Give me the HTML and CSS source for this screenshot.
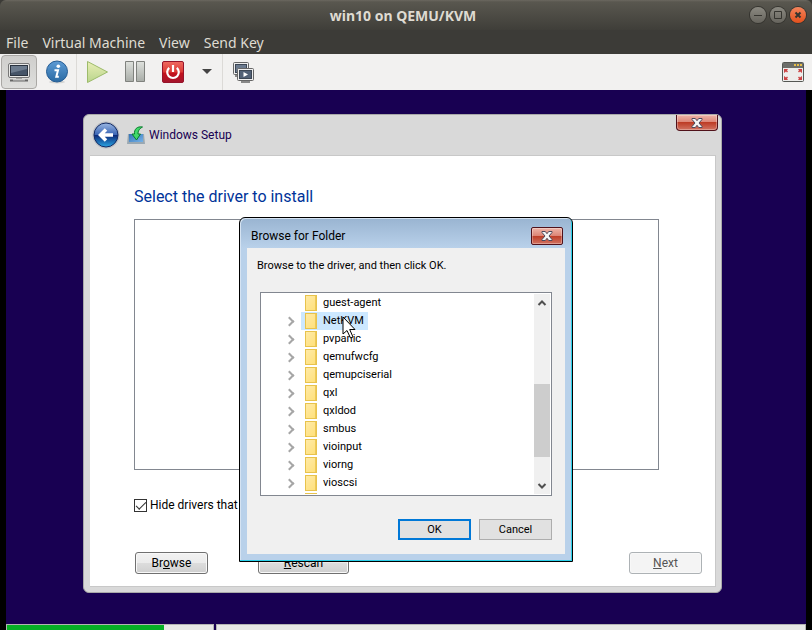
FILE: index.html
```html
<!DOCTYPE html>
<html lang="en">
<head>
    <meta charset="UTF-8">
    <meta name="viewport" content="width=device-width, initial-scale=1.0">
    <title>win10 on QEMU/KVM</title>
    <link rel="stylesheet" href="styles.css">
</head>
<body>
    <header class="titlebar">
        <h1>win10 on QEMU/KVM</h1>
        <div class="window-buttons">
            <button type="button" aria-label="Minimize"><svg viewBox="0 0 16 16"><path d="M4 8.5h8"/></svg></button>
            <button type="button" aria-label="Maximize"><svg viewBox="0 0 16 16"><path d="M4.5 4.5h7v7h-7z"/></svg></button>
            <button type="button" class="close" aria-label="Close"><svg viewBox="0 0 16 16"><path d="M5.5 5.5l5 5M10.5 5.5l-5 5"/></svg></button>
        </div>
    </header>
    <nav class="menubar">
        <a href="#">File</a>
        <a href="#">Virtual Machine</a>
        <a href="#">View</a>
        <a href="#">Send Key</a>
    </nav>

    <!-- Toolbar -->
    <div class="toolbar">
        <button type="button" class="tool active" aria-label="Console">
            <svg width="24" height="24" viewBox="0 0 24 24">
                <rect x="1.5" y="3.5" width="21" height="14" rx="1.5" fill="#e8e8e6" stroke="#777"/>
                <rect x="3.5" y="5.5" width="17" height="10" fill="#465568" stroke="#2b3440"/>
                <path d="M4 6h16v3L4 13z" fill="#6d7c8e"/>
                <path d="M9 18h6v2H9z" fill="#a5a5a3"/>
                <path d="M3 19.5h18v2H3z" fill="#666"/>
                <path d="M6 19h12v1.5H6z" fill="#ccc"/>
            </svg>
        </button>
        <button type="button" class="tool" aria-label="Details">
            <svg width="24" height="24" viewBox="0 0 24 24">
                <defs>
                    <linearGradient id="blue" x1="0" y1="0" x2="0" y2="1"><stop offset="0" stop-color="#5d9bd5"/><stop offset="1" stop-color="#2a6aa3"/></linearGradient>
                </defs>
                <ellipse cx="12" cy="22" rx="8" ry="1.5" fill="#d4d4d2"/>
                <circle cx="12" cy="11.5" r="10.5" fill="url(#blue)" stroke="#245c94"/>
                <circle cx="13.3" cy="6.3" r="1.8" fill="#fff"/>
                <path d="M9.5 10.2h3.5l-1.7 6.6h2.5" fill="none" stroke="#fff" stroke-width="2"/>
            </svg>
        </button>
        <span class="separator"></span>
        <button type="button" class="tool" aria-label="Run">
            <svg width="24" height="24" viewBox="0 0 24 24">
                <defs><linearGradient id="green" x1="0" y1="0" x2="0" y2="1"><stop offset="0" stop-color="#e9eeb5"/><stop offset="1" stop-color="#b9d58c"/></linearGradient></defs>
                <path d="M2.5 1.5v21L22.5 12z" fill="url(#green)" stroke="#9dbb6b" stroke-linejoin="round"/>
            </svg>
        </button>
        <button type="button" class="tool" aria-label="Pause">
            <svg width="24" height="24" viewBox="0 0 24 24">
                <defs><linearGradient id="grey" x1="0" y1="0" x2="0" y2="1"><stop offset="0" stop-color="#dfe1dd"/><stop offset="1" stop-color="#a9ada8"/></linearGradient></defs>
                <path d="M2.5 1.5h8v20h-8zM13.5 1.5h8v20h-8z" fill="url(#grey)" stroke="#80827e"/>
            </svg>
        </button>
        <button type="button" class="tool" aria-label="Shut Down">
            <svg width="24" height="24" viewBox="0 0 24 24">
                <defs><linearGradient id="red" x1="0" y1="0" x2="0" y2="1"><stop offset="0" stop-color="#ef6a61"/><stop offset=".5" stop-color="#dc3a35"/><stop offset=".55" stop-color="#c4121c"/><stop offset="1" stop-color="#a3142c"/></linearGradient></defs>
                <rect x="1.5" y="1.5" width="21" height="21" rx="1.5" fill="url(#red)" stroke="#96142a"/>
                <path d="M8.2 7.8a5.8 5.8 0 1 0 7.6 0M12 5v7" fill="none" stroke="#fff" stroke-width="2.2"/>
            </svg>
        </button>
        <button type="button" class="tool narrow" aria-label="Shut down menu">
            <svg width="10" height="6" viewBox="0 0 10 6"><path d="M0 0h10L5 5z" fill="#444"/></svg>
        </button>
        <span class="separator"></span>
        <button type="button" class="tool" aria-label="Snapshots">
            <svg width="24" height="24" viewBox="0 0 24 24">
                <path d="M4 15h8v2H4z" fill="#888"/>
                <rect x="2.5" y="2.5" width="15" height="12" rx="1" fill="#eee" stroke="#666"/>
                <rect x="4.5" y="4.5" width="11" height="8" fill="#6b7a8e" stroke="#3c4654"/>
                <rect x="6.5" y="8.5" width="16" height="12" rx="1" fill="#eee" stroke="#666"/>
                <rect x="8.5" y="10.5" width="12" height="8" fill="#526176" stroke="#3c4654"/>
                <path d="M12.5 12v5l4.5-2.5z" fill="#fff"/>
                <path d="M10 22h9" stroke="#888" stroke-width="2"/>
            </svg>
        </button>
        <button type="button" class="tool fullscreen" aria-label="Fullscreen">
            <svg width="24" height="24" viewBox="0 0 24 24">
                <rect x="1.5" y="2.5" width="21" height="19" rx="1" fill="#ededeb" stroke="#555753"/>
                <path d="M2 3h20v5H2z" fill="#6c6d69"/>
                <path d="M13 4h2v2h-2zM16 4h2v2h-2zM19 4h2v2h-2z" fill="#e6bd48"/>
                <path d="M3 9h4L6 10.5l1 1-1 1-1-1L3 13zM21 9h-4l1 1.5-1 1 1 1 1-1 2 1.5zM3 20h4l-1-1.5 1-1-1-1-1 1L3 16zM21 20h-4l1-1.5-1-1 1-1 1 1 2-1.5z" fill="#c44"/>
            </svg>
        </button>
    </div>

    <!-- Guest display -->
    <main class="desktop">
        <section class="setup">
            <header class="setup-header">
                <button type="button" class="back" aria-label="Back">
                    <svg width="28" height="28" viewBox="0 0 28 28">
                        <defs><linearGradient id="back" x1="0" y1="0" x2="0" y2="1"><stop offset="0" stop-color="#9cb8e3"/><stop offset=".48" stop-color="#3b66b5"/><stop offset=".52" stop-color="#0c2b7b"/><stop offset="1" stop-color="#2aa6e4"/></linearGradient></defs>
                        <circle cx="14" cy="14" r="13.5" fill="#b9bcc2"/>
                        <circle cx="14" cy="14" r="12" fill="url(#back)" stroke="#142c66"/>
                        <path d="M21 14H9M14 8.5L8.5 14l5.5 5.5" fill="none" stroke="#fff" stroke-width="3.5"/>
                    </svg>
                </button>
                <svg width="18" height="18" viewBox="0 0 18 18">
                    <defs><linearGradient id="box" x1="0" y1="0" x2="1" y2="1"><stop offset="0" stop-color="#3473b5"/><stop offset="1" stop-color="#75b2e8"/></linearGradient></defs>
                    <path d="M1 8h16l1 10H0z" fill="#9aa8b2"/>
                    <path d="M2 8h14v8H2z" fill="url(#box)"/>
                    <path d="M15.5 1C10 0 7 3.5 7.5 8H5l4.5 6 4-6H11c0-3 1-5 4.5-7z" fill="#42d86a" stroke="#087b2c"/>
                </svg>
                <h2>Windows Setup</h2>
                <button type="button" class="red-close setup-close" aria-label="Close">
                    <svg width="12" height="10" viewBox="0 0 12 10"><path d="M1 .5h3.3L6 2.7 7.7.5H11v1L8 5l3 3.5v1H7.7L6 7.3 4.3 9.5H1v-1L4 5 1 1.5z" fill="#f5f5f5" stroke="#4d4a5c"/></svg>
                </button>
            </header>
            <div class="setup-body">
                <h3>Select the driver to install</h3>
                <div class="driver-list"></div>
                <label class="check"><input type="checkbox" checked>Hide drivers that</label>
                <div class="setup-buttons">
                    <button type="button">Br<u>o</u>wse</button>
                    <button type="button" class="rescan"><u>R</u>escan</button>
                    <button type="button" class="next" disabled><u>N</u>ext</button>
                </div>
            </div>
        </section>

        <!-- Folder picker -->
        <section class="dialog">
            <header class="dialog-header">
                <h2>Browse for Folder</h2>
                <button type="button" class="red-close" aria-label="Close">
                    <svg width="12" height="10" viewBox="0 0 12 10"><path d="M1 .5h3.3L6 2.7 7.7.5H11v1L8 5l3 3.5v1H7.7L6 7.3 4.3 9.5H1v-1L4 5 1 1.5z" fill="#f5f5f5" stroke="#4d4a5c"/></svg>
                </button>
            </header>
            <div class="dialog-body">
                <p>Browse to the driver, and then click OK.</p>
                <div class="tree">
                    <ul>
                        <li class="leaf"><a href="#">guest-agent</a></li>
                        <li class="selected"><a href="#">NetKVM</a></li>
                        <li><a href="#">pvpanic</a></li>
                        <li><a href="#">qemufwcfg</a></li>
                        <li><a href="#">qemupciserial</a></li>
                        <li><a href="#">qxl</a></li>
                        <li><a href="#">qxldod</a></li>
                        <li><a href="#">smbus</a></li>
                        <li><a href="#">vioinput</a></li>
                        <li><a href="#">viorng</a></li>
                        <li><a href="#">vioscsi</a></li>
                        <li class="leaf"><a href="#" aria-label="Next folder"></a></li>
                    </ul>
                    <div class="scrollbar">
                        <button type="button" aria-label="Scroll up"><svg width="10" height="8" viewBox="0 0 10 8"><path d="M1.5 6L5 2.5 8.5 6"/></svg></button>
                        <div class="track"><div class="thumb"></div></div>
                        <button type="button" aria-label="Scroll down"><svg width="10" height="8" viewBox="0 0 10 8"><path d="M1.5 2L5 5.5 8.5 2"/></svg></button>
                    </div>
                </div>
                <div class="dialog-buttons">
                    <button type="button" class="default">OK</button>
                    <button type="button">Cancel</button>
                </div>
            </div>
        </section>

        <svg class="cursor" width="14" height="24" viewBox="0 0 14 24"><path d="M1 1v17l4-3.5 3.5 7.5 2.5-1-3.3-7.5H13z" fill="#fff" stroke="#000"/></svg>

        <footer class="steps">
            <progress class="step" value="76" max="100" aria-label="Collecting information"></progress>
            <div class="step rest"></div>
        </footer>
    </main>
</body>
</html>
```
FILE: styles.css
```css
*, *::before {
    box-sizing: border-box;
}
body {
    font-family: "Noto Sans", sans-serif;
    margin: 0;
    min-height: 100vh;
    display: flex;
    flex-direction: column;
    background: #3c3b37;
}
button {
    font: inherit;
    padding: 0;
    border: none;
    background: none;
}
h1, h2, h3, p, ul {
    margin: 0;
    padding: 0;
    font-weight: normal;
}
svg {
    display: block;
    flex: none;
}
a {
    color: inherit;
    text-decoration: none;
}

/* Host window */
.titlebar {
    display: grid;
    grid-template-columns: 1fr auto 1fr;
    align-items: center;
    height: 30px;
    padding-right: 6px;
    background: linear-gradient(#6b6860 0, #59574f 2px, #3f3e39 100%);
    border-radius: 6px 6px 0 0;
    color: #dfdbd2;
}
.titlebar h1 {
    grid-column: 2;
    font-size: 14px;
    font-weight: bold;
}
.window-buttons {
    display: flex;
    justify-content: flex-end;
    gap: 4px;
}
.window-buttons button {
    width: 16px;
    height: 16px;
    border-radius: 50%;
    background: linear-gradient(#8b8981, #66645d);
    box-shadow: 0 0 0 1px #35342f;
}
.window-buttons .close {
    background: linear-gradient(#f4845c, #e2501c);
}
.window-buttons path {
    fill: none;
    stroke: #35342f;
}
.window-buttons .close path {
    stroke-width: 2;
}
.menubar {
    display: flex;
    align-items: center;
    gap: 14px;
    height: 24px;
    padding: 0 6px;
    font-size: 14px;
    color: #dfdbd2;
}
.toolbar {
    display: flex;
    align-items: center;
    height: 36px;
    padding: 0 1px;
    background: #f2f1f0;
}
.tool {
    display: flex;
    align-items: center;
    justify-content: center;
    width: 38px;
    height: 34px;
}
.tool.active {
    width: 36px;
    margin-right: 1px;
    background: linear-gradient(#cfcecc, #dededc);
    border: 1px solid #aaa8a5;
    border-radius: 4px;
}
.tool.narrow {
    width: 30px;
}
.tool.fullscreen {
    margin-left: auto;
    width: 36px;
}
.separator {
    width: 1px;
    height: 36px;
    margin-right: 1px;
    background: #dcdad7;
}

/* Guest display */
.desktop {
    position: relative;
    flex: 1;
    display: flex;
    flex-direction: column;
    justify-content: flex-end;
    min-height: 540px;
    border: solid #000;
    border-width: 0 6px;
    background: #180052;
    font-family: Roboto, "Open Sans", sans-serif;
    overflow: hidden;
}
.steps {
    display: flex;
    gap: 2px;
    height: 6px;
}
.step {
    appearance: none;
    width: 26%;
    height: 6px;
    border: 1px solid #b4b4b4;
    border-bottom: none;
    background: #e6e6e6;
}
.step.rest {
    flex: 1;
}
.step::-webkit-progress-bar {
    background: #e6e6e6;
}
.step::-webkit-progress-value {
    background: #06b025;
}

/* Windows Setup */
.setup {
    position: absolute;
    top: 24px;
    left: 77px;
    right: 84px;
    padding: 0 5px 5px 6px;
    border: 1px solid #a9a9a9;
    border-radius: 6px;
    background: #d9d9d9;
    font-size: 12px;
    color: #000;
}
.setup-header {
    display: flex;
    align-items: center;
    gap: 7px;
    height: 40px;
    padding-left: 2px;
}
.setup-header h2 {
    flex: 1;
    margin-left: -3px;
    font-size: 12px;
    color: #180052;
}
.red-close {
    display: flex;
    align-items: center;
    justify-content: center;
    width: 32px;
    height: 18px;
    border: 1px solid #50111a;
    border-radius: 2px;
    background: linear-gradient(#eeb4a8 0, #dc8374 50%, #bd3c26 50%, #d27362 100%);
    box-shadow: inset 0 0 0 1px rgba(255, 255, 255, 0.3);
}
.setup-close {
    align-self: flex-start;
    width: 42px;
    height: 16px;
    margin-right: -2px;
    border-top: none;
    border-radius: 0 0 4px 4px;
}
.setup-body {
    padding: 30px 12px 12px 44px;
    border: 1px solid #c8c8c8;
    border-width: 1px 1px 1px 0;
    background: #fff;
}
.setup-body h3 {
    font-size: 16px;
    line-height: 22px;
    color: #003399;
}
.driver-list {
    height: 251px;
    margin: 11px 44px 0 0;
    border: 1px solid #828790;
}
.check {
    display: flex;
    align-items: center;
    gap: 3px;
    height: 20px;
    margin-top: 25px;
}
.check input {
    appearance: none;
    width: 13px;
    height: 13px;
    margin: 0;
    border: 1px solid #333;
    background: #fff;
}
.check input:checked::before {
    content: "";
    display: block;
    width: 10px;
    height: 5px;
    margin: 2px 1px;
    border: solid #333;
    border-width: 0 0 1px 1px;
    transform: rotate(-45deg);
}
.setup-buttons {
    display: flex;
    margin-top: 37px;
    padding: 0 1px;
}
.setup-buttons button {
    width: 73px;
    height: 22px;
    border: 1px solid #707070;
    border-radius: 3px;
    background: linear-gradient(#f2f2f2 0, #ebebeb 50%, #dddddd 50%, #cfcfcf 100%);
    box-shadow: inset 0 0 0 1px #f8f8f8;
    color: #000;
}
.setup-buttons .rescan {
    width: 91px;
    margin-left: 50px;
}
.setup-buttons .next {
    margin-left: auto;
    border-color: #adb2b5;
    background: #f4f4f4;
    color: #555;
}

/* Browse for Folder */
.dialog {
    position: absolute;
    top: 127px;
    left: 233px;
    width: 334px;
    padding: 0 6px 6px;
    border: 1px solid #000;
    border-radius: 6px 6px 0 0;
    background: linear-gradient(#99b4d1 0, #b9d1ea 30px);
    box-shadow: inset -1px -1px 0 #2bd0ea, inset 1px 1px 0 #d5e3f2;
    font-size: 11px;
    color: #000;
}
.dialog-header {
    display: flex;
    align-items: center;
    justify-content: space-between;
    height: 30px;
    padding: 6px 3px 0 5px;
}
.dialog-header h2 {
    font-size: 12px;
}
.dialog-body {
    margin: 0 1px 1px;
    padding: 10px 13px 14px;
    background: #f0f0f0;
}
.dialog-body p {
    margin-left: -3px;
    line-height: 16px;
}
.tree {
    display: flex;
    height: 204px;
    margin-top: 18px;
    padding: 1px;
    border: 1px solid #828790;
    background: #fff;
    overflow: hidden;
}
.tree ul {
    flex: 1;
    list-style: none;
    overflow: hidden;
}
.tree li {
    display: flex;
    align-items: center;
    height: 18px;
    padding-left: 24px;
}
.tree li::before {
    content: "";
    width: 7px;
    height: 7px;
    margin-right: 8px;
    border: solid #a6a6a6;
    border-width: 2px 2px 0 0;
    transform: rotate(45deg);
}
.tree li.leaf::before {
    visibility: hidden;
}
.tree a {
    display: flex;
    align-items: center;
    gap: 6px;
    height: 18px;
    padding: 0 4px;
    line-height: 16px;
}
.tree a::before {
    content: "";
    width: 12px;
    height: 16px;
    border: 1px solid #e8c34c;
    background: linear-gradient(135deg, #ffeaa6, #ffe07a);
    box-shadow: inset -1px 0 0 #edc958;
}
.tree .selected a {
    background: #cce8ff;
}
.scrollbar {
    display: flex;
    flex-direction: column;
    width: 16px;
    background: #f0f0f0;
}
.scrollbar button {
    display: flex;
    align-items: center;
    justify-content: center;
    height: 17px;
}
.scrollbar path {
    fill: none;
    stroke: #505050;
    stroke-width: 2;
}
.track {
    display: flex;
    flex-direction: column;
    justify-content: flex-end;
    flex: 1;
    padding-bottom: 20px;
}
.thumb {
    height: 73px;
    background: #cdcdcd;
}
.dialog-buttons {
    display: flex;
    justify-content: flex-end;
    gap: 8px;
    margin-top: 23px;
}
.dialog-buttons button {
    width: 73px;
    height: 21px;
    border: 1px solid #adadad;
    background: #e1e1e1;
    color: #000;
}
.dialog-buttons .default {
    border: 2px solid #0078d7;
}
.cursor {
    position: absolute;
    top: 226px;
    left: 336px;
}
```
